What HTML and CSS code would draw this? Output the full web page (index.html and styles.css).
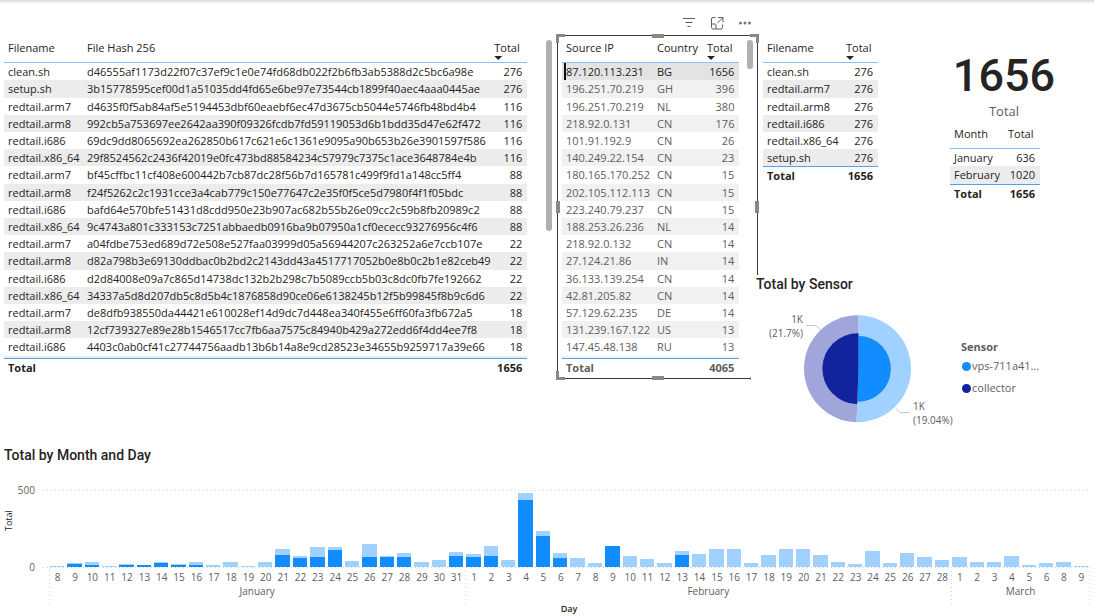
FILE: index.html
```html
<!DOCTYPE html>
<html lang="en">
<head>
<meta charset="utf-8">
<title>Honeypot report</title>
<link rel="stylesheet" href="styles.css">
</head>
<body>
<main class="report">
  <section class="visual files">
    <table class="grid files-table">
      <colgroup><col class="c-name"><col><col class="c-count"></colgroup>
      <thead><tr><th>Filename</th><th>File Hash 256</th><th class="sorted">Total</th></tr></thead>
      <tbody>
        <tr><td>clean.sh</td><td>d46555af1173d22f07c37ef9c1e0e74fd68db022f2b6fb3ab5388d2c5bc6a98e</td><td>276</td></tr>
        <tr><td>setup.sh</td><td>3b15778595cef00d1a51035dd4fd65e6be97e73544cb1899f40aec4aaa0445ae</td><td>276</td></tr>
        <tr><td>redtail.arm7</td><td>d4635f0f5ab84af5e5194453dbf60eaebf6ec47d3675cb5044e5746fb48bd4b4</td><td>116</td></tr>
        <tr><td>redtail.arm8</td><td>992cb5a753697ee2642aa390f09326fcdb7fd59119053d6b1bdd35d47e62f472</td><td>116</td></tr>
        <tr><td>redtail.i686</td><td>69dc9dd8065692ea262850b617c621e6c1361e9095a90b653b26e3901597f586</td><td>116</td></tr>
        <tr><td>redtail.x86_64</td><td>29f8524562c2436f42019e0fc473bd88584234c57979c7375c1ace3648784e4b</td><td>116</td></tr>
        <tr><td>redtail.arm7</td><td>bf45cffbc11cf408e600442b7cb87dc28f56b7d165781c499f9fd1a148cc5ff4</td><td>88</td></tr>
        <tr><td>redtail.arm8</td><td>f24f5262c2c1931cce3a4cab779c150e77647c2e35f0f5ce5d7980f4f1f05bdc</td><td>88</td></tr>
        <tr><td>redtail.i686</td><td>bafd64e570bfe51431d8cdd950e23b907ac682b55b26e09cc2c59b8fb20989c2</td><td>88</td></tr>
        <tr><td>redtail.x86_64</td><td>9c4743a801c333153c7251abbaedb0916ba9b07950a1cf0ececc93276956c4f6</td><td>88</td></tr>
        <tr><td>redtail.arm7</td><td>a04fdbe753ed689d72e508e527faa03999d05a56944207c263252a6e7ccb107e</td><td>22</td></tr>
        <tr><td>redtail.arm8</td><td>d82a798b3e69130ddbac0b2bd2c2143dd43a4517717052b0e8b0c2b1e82ceb49</td><td>22</td></tr>
        <tr><td>redtail.i686</td><td>d2d84008e09a7c865d14738dc132b2b298c7b5089ccb5b03c8dc0fb7fe192662</td><td>22</td></tr>
        <tr><td>redtail.x86_64</td><td>34337a5d8d207db5c8d5b4c1876858d90ce06e6138245b12f5b99845f8b9c6d6</td><td>22</td></tr>
        <tr><td>redtail.arm7</td><td>de8dfb938550da44421e610028ef14d9dc7d448ea340f455e6ff60fa3fb672a5</td><td>18</td></tr>
        <tr><td>redtail.arm8</td><td>12cf739327e89e28b1546517cc7fb6aa7575c84940b429a272edd6f4dd4ee7f8</td><td>18</td></tr>
        <tr><td>redtail.i686</td><td>4403c0ab0cf41c27744756aadb13b6b14a8e9cd28523e34655b9259717a39e66</td><td>18</td></tr>
        <tr class="peek" aria-hidden="true"><td colspan="3"></td></tr>
      </tbody>
      <tfoot><tr><td>Total</td><td></td><td>1656</td></tr></tfoot>
    </table>
    <div class="thumb"></div>
  </section>

  <section class="sources">
    <div class="toolbar">
      <button type="button" aria-label="Filters"><svg width="14" height="12" viewBox="0 0 14 12"><path d="M1 1.5h12M3.5 5.5h7M5.5 9.5h3"/></svg></button>
      <button type="button" aria-label="Focus mode"><svg width="14" height="14" viewBox="0 0 14 14"><path d="M5.500 1.500H3A1.500 1.500 0 0 0 1.500 3v8.500A1.500 1.500 0 0 0 3 13h8a1.500 1.500 0 0 0 1.500-1.500V8.500M8 1.500h5v5M13 1.500 7.500 7M1.500 8H5a1 1 0 0 1 1 1v4"/></svg></button>
      <button type="button" aria-label="More options"><svg width="14" height="14" viewBox="0 0 14 14"><g class="dots"><circle cx="2.500" cy="7" r="1.500"/><circle cx="7" cy="7" r="1.500"/><circle cx="11.500" cy="7" r="1.500"/></g></svg></button>
    </div>
    <div class="frame">
      <table class="grid muted">
        <colgroup><col class="c-ip"><col class="c-country"><col></colgroup>
        <thead><tr><th>Source IP</th><th>Country</th><th class="sorted">Total</th></tr></thead>
        <tbody>
          <tr class="selected"><td>87.120.113.231</td><td>BG</td><td>1656</td></tr>
          <tr><td>196.251.70.219</td><td>GH</td><td>396</td></tr>
          <tr><td>196.251.70.219</td><td>NL</td><td>380</td></tr>
          <tr><td>218.92.0.131</td><td>CN</td><td>176</td></tr>
          <tr><td>101.91.192.9</td><td>CN</td><td>26</td></tr>
          <tr><td>140.249.22.154</td><td>CN</td><td>23</td></tr>
          <tr><td>180.165.170.252</td><td>CN</td><td>15</td></tr>
          <tr><td>202.105.112.113</td><td>CN</td><td>15</td></tr>
          <tr><td>223.240.79.237</td><td>CN</td><td>15</td></tr>
          <tr><td>188.253.26.236</td><td>NL</td><td>14</td></tr>
          <tr><td>218.92.0.132</td><td>CN</td><td>14</td></tr>
          <tr><td>27.124.21.86</td><td>IN</td><td>14</td></tr>
          <tr><td>36.133.139.254</td><td>CN</td><td>14</td></tr>
          <tr><td>42.81.205.82</td><td>CN</td><td>14</td></tr>
          <tr><td>57.129.62.235</td><td>DE</td><td>14</td></tr>
          <tr><td>131.239.167.122</td><td>US</td><td>13</td></tr>
          <tr><td>147.45.48.138</td><td>RU</td><td>13</td></tr>
          <tr class="peek" aria-hidden="true"><td colspan="3"></td></tr>
        </tbody>
        <tfoot><tr><td>Total</td><td></td><td>4065</td></tr></tfoot>
      </table>
      <div class="thumb short"></div>
      <span class="corner tl"></span><span class="corner tr"></span><span class="corner bl"></span><span class="corner br"></span>
      <span class="handle top"></span><span class="handle bottom"></span><span class="handle left"></span><span class="handle right"></span>
    </div>
  </section>

  <div class="side">
    <div class="summary">
      <table class="grid names-table">
        <colgroup><col class="c-name"><col></colgroup>
        <thead><tr><th>Filename</th><th class="sorted">Total</th></tr></thead>
        <tbody>
          <tr><td>clean.sh</td><td>276</td></tr>
          <tr><td>redtail.arm7</td><td>276</td></tr>
          <tr><td>redtail.arm8</td><td>276</td></tr>
          <tr><td>redtail.i686</td><td>276</td></tr>
          <tr><td>redtail.x86_64</td><td>276</td></tr>
          <tr><td>setup.sh</td><td>276</td></tr>
        </tbody>
        <tfoot><tr><td>Total</td><td>1656</td></tr></tfoot>
      </table>
      <div class="totals">
        <div class="card"><div class="card-value">1656</div><div class="card-label">Total</div></div>
        <table class="grid months-table">
          <colgroup><col class="c-month"><col></colgroup>
          <thead><tr><th>Month</th><th>Total</th></tr></thead>
          <tbody>
            <tr><td>January</td><td>636</td></tr>
            <tr><td>February</td><td>1020</td></tr>
          </tbody>
          <tfoot><tr><td>Total</td><td>1656</td></tr></tfoot>
        </table>
      </div>
    </div>

    <section class="sensor">
      <h2>Total by Sensor</h2>
      <div class="sensor-body">
        <svg class="pie" width="190" height="130" viewBox="0 0 190 130" role="img" aria-label="Total by Sensor">
          <path fill="#a0d1ff" d="M92.500 65.700V12.200a53.500 53.500 0 1 1-2 107z"/>
          <path fill="#a0a6da" d="M92.500 65.700V12.200a53.500 53.500 0 0 0-2 107z"/>
          <path fill="#118dff" d="M92.500 65.700v-33a33 33 0 1 1-1.200 66z"/>
          <path fill="#12239e" d="M92.500 65.700V30.200a35.500 35.500 0 0 0-1.300 71z"/>
          <path class="leader" d="M40 22.500h10l5 5M130 105.500l4 4h10"/>
          <text x="37" y="20" text-anchor="end">1K</text>
          <text x="37" y="34" text-anchor="end">(21.7%)</text>
          <text x="147" y="107">1K</text>
          <text x="147" y="121">(19.04%)</text>
        </svg>
        <div class="legend">
          <h3>Sensor</h3>
          <ul>
            <li><i class="dot vps"></i>vps-711a41...</li>
            <li><i class="dot collector"></i>collector</li>
          </ul>
        </div>
      </div>
    </section>
  </div>

  <section class="timeline">
    <h2>Total by Month and Day</h2>
    <div class="chart">
      <div class="y-title">Total</div>
      <div class="y-ticks"><span>500</span><span>0</span></div>
      <div class="plot" id="plot"></div>
    </div>
    <div class="x-title">Day</div>
  </section>
</main>
<script src="chart.js"></script>
</body>
</html>
```
FILE: styles.css
```css
* { box-sizing: border-box; }

body {
  margin: 0;
  background: #fff linear-gradient(#d8d8d8, #fff) no-repeat top / 100% 4px;
  color: #252423;
  font: 11px/14px "Open Sans", "Noto Sans", sans-serif;
}

h2, h3, ul { margin: 0; padding: 0; }
h2 { font: 500 14px/18px Roboto, sans-serif; }
ul { list-style: none; }

.report {
  display: grid;
  grid-template-columns: 557fr 201fr 336fr;
}

/* Tables */
.grid {
  border-collapse: separate;
  border-spacing: 0;
  table-layout: fixed;
  width: 100%;
}
.grid th, .grid td { padding: 0 5px 0 4px; text-align: left; white-space: nowrap; }
.grid th {
  height: 26px;
  padding-top: 4px;
  padding-right: 0;
  border-bottom: 1px solid #83c3fb;
  font-weight: 400;
  vertical-align: top;
}
.grid td { height: 17px; }
.grid td:last-child { text-align: right; }
.grid tbody tr:nth-child(5n+2) td { height: 18px; }
.grid tbody tr:nth-child(even) td { background: #ececec; }
.grid tbody .peek td { height: 2px; }
.grid tfoot td { height: 18px; border-top: 1px solid #4ba3f5; font-weight: 700; }
.sorted::after {
  content: "";
  display: block;
  width: 8px;
  height: 4px;
  margin-top: 1px;
  background: #252423;
  clip-path: polygon(0 0, 100% 0, 50% 100%);
}
.muted td { color: #605e5c; }
.muted tbody tr:nth-child(even) td { background: #f1f1f1; }
.muted tbody .selected td { background: #e3e3e3; color: #252423; }
.muted tbody .selected td:first-child { background: linear-gradient(#111, #111) 2px 0 / 2px 100% no-repeat #e3e3e3; }

.c-name { width: 79px; }
.c-count { width: 37px; }
.c-ip { width: 91px; }
.c-country { width: 50px; }
.c-month { width: 54px; }

.thumb { width: 6px; height: 191px; margin-top: 3px; border-radius: 3px; background: #b1b0af; }
.thumb.short { height: 29px; }

.files { display: flex; align-items: flex-start; gap: 19px; padding: 37px 5px 0 4px; }

/* Selected visual */
.toolbar { display: flex; justify-content: flex-end; gap: 14px; height: 35px; padding: 16px 6px 0 0; }
.toolbar button { width: 14px; height: 14px; padding: 0; border: 0; background: none; }
.toolbar svg { display: block; fill: none; stroke: #605e5c; }
.toolbar .dots { fill: #797775; stroke: none; }
.frame {
  position: relative;
  display: flex;
  align-items: flex-start;
  gap: 8px;
  padding: 1px 4px 2px 4px;
  border: 1px solid #3b3a39;
}
.corner, .handle { position: absolute; }
.corner { width: 9px; height: 9px; border: 0 solid #8a8886; }
.tl { top: -2px; left: -2px; border-width: 3px 0 0 3px; }
.tr { top: -2px; right: -2px; border-width: 3px 3px 0 0; }
.bl { bottom: -2px; left: -2px; border-width: 0 0 3px 3px; }
.br { bottom: -2px; right: -2px; border-width: 0 3px 3px 0; }
.handle { background: #8a8886; }
.top, .bottom { left: calc(50% - 6px); width: 12px; height: 4px; }
.left, .right { top: calc(50% - 6px); width: 4px; height: 12px; }
.top { top: -2px; }
.bottom { bottom: -2px; }
.left { left: -2px; }
.right { right: -2px; }

/* Right column */
.summary { display: flex; align-items: flex-start; min-height: 275px; padding: 37px 0 0 5px; }
.names-table { width: 115px; }
.totals { flex: 1; display: flex; flex-direction: column; align-items: center; padding: 12px 0 0 18px; }
.card { text-align: center; padding-left: 18px; color: #252423; }
.card-value { font: 500 45px/53px Roboto, sans-serif; }
.card-label { color: #605e5c; font-size: 13px; line-height: 18px; }
.months-table { width: 90px; margin-top: 3px; }

.sensor { position: relative; z-index: 1; margin-left: -7px; padding-left: 5px; background: #fff; }
.sensor-body { display: flex; gap: 5px; padding: 10px 0 0 10px; }
.pie { flex: none; }
.pie text { fill: #605e5c; font-size: 10px; }
.leader { fill: none; stroke: #c8c6c4; }
.legend { padding-top: 34px; color: #605e5c; line-height: 20px; }
.legend h3 { font-size: 11px; line-height: 19px; }
.legend li { display: flex; align-items: center; margin-bottom: 2px; }
.dot { width: 9px; height: 9px; margin: 0 1px; border-radius: 50%; }
.vps { background: #118dff; }
.collector { background: #12239e; }

/* Column chart */
.timeline { grid-column: 1 / -1; padding: 13px 4px 0; }
.chart { display: flex; margin-top: 26px; color: #605e5c; font-size: 10px; }
.y-title {
  width: 10px;
  height: 62px;
  writing-mode: vertical-rl;
  transform: rotate(180deg);
  color: #252423;
  font-size: 9px;
  line-height: 10px;
  text-align: center;
}
.y-ticks { display: flex; flex-direction: column; justify-content: space-between; width: 21px; height: 91px; margin: -7px 8px 0 0; text-align: right; }
.plot {
  flex: 1;
  display: flex;
  padding-left: 6px;
  background:
    repeating-linear-gradient(90deg, #d6d4d2 0 1px, #fff0 1px 4px) 0 0 / 100% 1px no-repeat,
    repeating-linear-gradient(90deg, #d6d4d2 0 1px, #fff0 1px 4px) 0 77px / 100% 1px no-repeat;
}
.bars, .days { display: flex; }
.bars { height: 77px; align-items: flex-end; }
.slot { flex: 1 1 0; height: 100%; padding: 0 2px 0 1px; }
.bar { display: flex; flex-direction: column; justify-content: flex-end; height: 100%; }
.rest { background: #a0d1ff; }
.hit { background: #118dff; }
.labels {
  padding-top: 3px;
  height: 37px;
  background: repeating-linear-gradient(#d6d4d2 0 1px, #fff0 1px 4px) left / 1px 100% no-repeat;
}
.month:last-child .labels {
  background:
    repeating-linear-gradient(#d6d4d2 0 1px, #fff0 1px 4px) left / 1px 100% no-repeat,
    repeating-linear-gradient(#d6d4d2 0 1px, #fff0 1px 4px) right / 1px 100% no-repeat;
}
.days span { flex: 1 1 0; width: 0; text-align: center; }
.month-name { text-align: center; }
.x-title { text-align: center; padding-left: 44px; font-size: 9px; font-weight: 600; line-height: 10px; }
```
FILE: chart.js
```js
// Each day: [label, total, highlighted part]
const axisMax = 500;
const months = [
  ["January", [
    [8, 6, 0], [9, 24, 20], [10, 30, 14], [11, 6, 0], [12, 20, 14], [13, 15, 12],
    [14, 32, 24], [15, 20, 16], [16, 30, 14], [17, 13, 0], [18, 34, 0], [19, 6, 0],
    [20, 30, 0], [21, 114, 80], [22, 74, 56], [23, 130, 64], [24, 128, 108],
    [25, 42, 0], [26, 150, 64], [27, 69, 64], [28, 88, 64], [29, 32, 0],
    [30, 43, 0], [31, 95, 69]]],
  ["February", [
    [1, 83, 64], [2, 139, 69], [3, 44, 0], [4, 478, 438], [5, 236, 200],
    [6, 88, 56], [7, 56, 0], [8, 26, 0], [9, 134, 134], [10, 74, 0], [11, 50, 0],
    [12, 24, 0], [13, 106, 76], [14, 82, 0], [15, 118, 0], [16, 120, 0],
    [17, 28, 0], [18, 80, 0], [19, 120, 0], [20, 120, 0], [21, 80, 0],
    [22, 32, 0], [23, 19, 0], [24, 101, 0], [25, 26, 0], [26, 94, 0],
    [27, 63, 0], [28, 44, 0]]],
  ["March", [
    [1, 63, 0], [2, 32, 0], [3, 32, 0], [4, 69, 0], [5, 13, 0], [6, 26, 0],
    [8, 32, 0], [9, 8, 0]]]
];

const percent = value => (value / axisMax * 100).toFixed(1) + "%";

document.getElementById("plot").innerHTML = months.map(([name, days]) => `
  <div class="month" style="flex: ${days.length} 1 0">
    <div class="bars">${days.map(([, total, hit]) => `
      <div class="slot"><div class="bar">
        <div class="rest" style="height: ${percent(total - hit)}"></div>
        <div class="hit" style="height: ${percent(hit)}"></div>
      </div></div>`).join("")}
    </div>
    <div class="labels">
      <div class="days">${days.map(([day]) => `<span>${day}</span>`).join("")}</div>
      <div class="month-name">${name}</div>
    </div>
  </div>`).join("");
```
